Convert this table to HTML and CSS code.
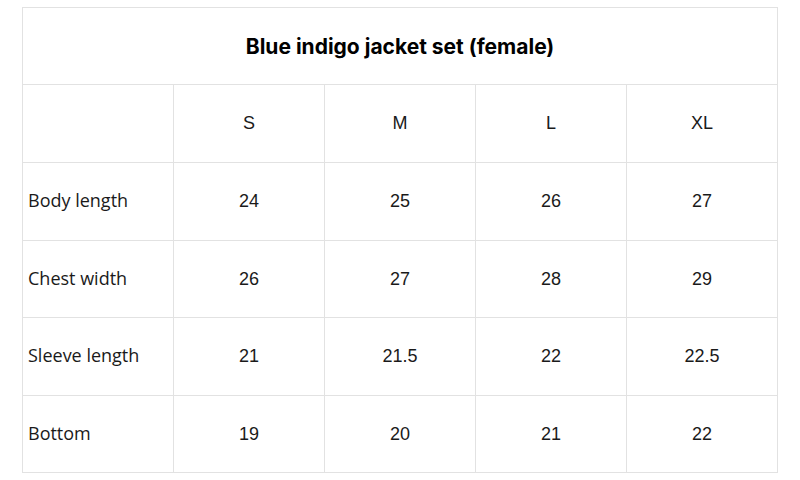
FILE: index.html
```html
<!DOCTYPE html>
<html>
<head>
<meta charset="utf-8">
<link rel="stylesheet" href="styles.css">
</head>
<body>
<table class="size-table">
  <colgroup>
    <col class="c"><col class="c"><col class="c"><col class="c"><col class="c">
  </colgroup>
  <tr class="title-row"><th colspan="5" class="title">Blue indigo jacket set (female)</th></tr>
  <tr class="r1"><td class="label"></td><td>S</td><td>M</td><td>L</td><td>XL</td></tr>
  <tr class="r2"><td class="label">Body length</td><td>24</td><td>25</td><td>26</td><td>27</td></tr>
  <tr class="r3"><td class="label">Chest width</td><td>26</td><td>27</td><td>28</td><td>29</td></tr>
  <tr class="r4"><td class="label">Sleeve length</td><td>21</td><td>21.5</td><td>22</td><td>22.5</td></tr>
  <tr class="r5"><td class="label">Bottom</td><td>19</td><td>20</td><td>21</td><td>22</td></tr>
</table>
</body>
</html>
```
FILE: styles.css
```css
html, body {
  margin: 0;
  padding: 0;
  background: #ffffff;
}
.size-table {
  margin: 7px 0 0 22px;
  width: 756px;
  border-collapse: collapse;
  table-layout: fixed;
}
.size-table .c {
  width: 151px;
}
.size-table th,
.size-table td {
  border: 1px solid #e2e2e2;
  padding: 0;
  text-align: center;
  vertical-align: middle;
  font-family: "Liberation Sans", Arial, sans-serif;
  font-size: 18px;
  font-weight: normal;
  color: #1a1a1a;
}
.size-table .title {
  font-family: Inter, "Liberation Sans", sans-serif;
  font-weight: 700;
  font-size: 21px;
  color: #000000;
}
.size-table .label {
  text-align: left;
  padding: 0 0 3px 5px;
  font-family: "Open Sans", "Liberation Sans", sans-serif;
  font-size: 18px;
  color: #1a1a1a;
}
.title-row { height: 77px; }
.r1 { height: 78px; }
.r2 { height: 78px; }
.r3 { height: 77px; }
.r4 { height: 78px; }
.r5 { height: 77px; }
```
